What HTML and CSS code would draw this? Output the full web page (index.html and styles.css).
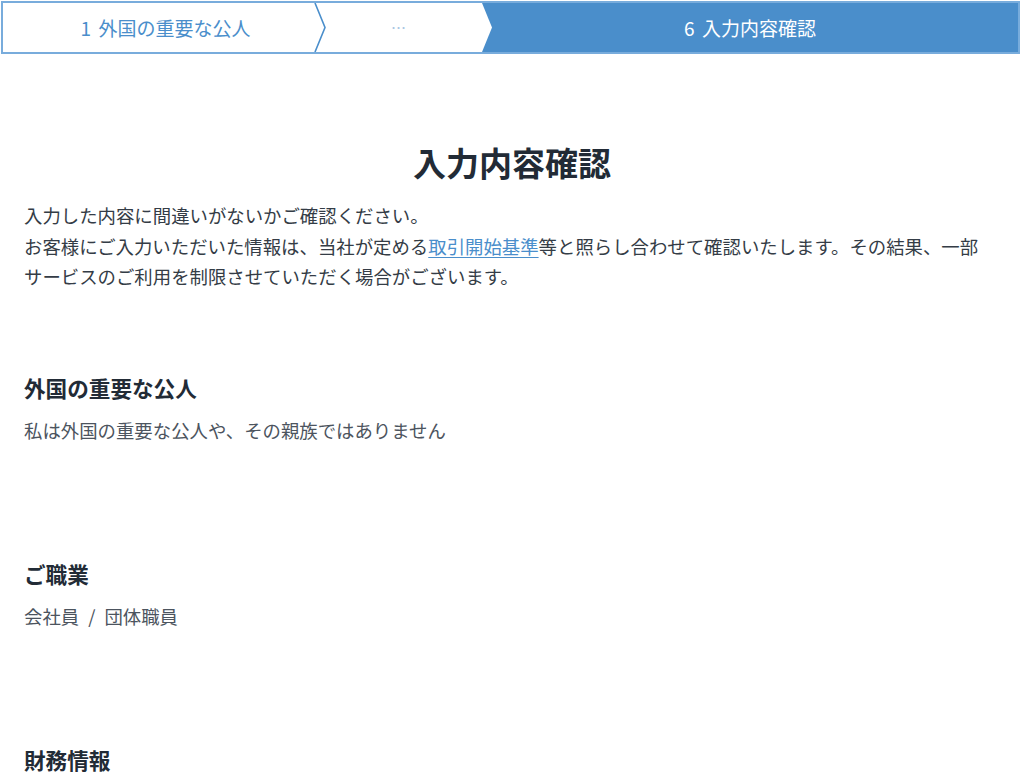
FILE: index.html
```html
<!DOCTYPE html>
<html lang="ja">
<head>
    <meta charset="UTF-8">
    <meta name="viewport" content="width=device-width, initial-scale=1.0">
    <title>入力内容確認</title>
    <link rel="stylesheet" href="styles.css">
</head>
<body>
    <nav class="stepper">
        <div class="step step-done">
            <span>1 外国の重要な公人</span>
            <svg class="step-arrow" width="14" height="49" viewBox="0 0 14 49">
                <polyline points="1,0 11,24.5 1,49" fill="none" stroke="#4a8ecb" stroke-width="1.6"/>
            </svg>
        </div>
        <div class="step step-skip">
            <span>…</span>
        </div>
        <div class="step step-current">
            <svg class="step-notch" width="11" height="49" viewBox="0 0 11 49">
                <polygon points="0,0 10,24.5 0,49" fill="#ffffff"/>
            </svg>
            <span>6 入力内容確認</span>
        </div>
    </nav>

    <main class="confirm">
        <h1 class="confirm-title">入力内容確認</h1>
        <p class="confirm-lead">
            入力した内容に間違いがないかご確認ください。<br>
            お客様にご入力いただいた情報は、当社が定める<a href="#" class="link">取引開始基準</a>等と照らし合わせて確認いたします。その結果、一部サービスのご利用を制限させていただく場合がございます。
        </p>

        <section class="item">
            <h2 class="item-label">外国の重要な公人</h2>
            <p class="item-value">私は外国の重要な公人や、その親族ではありません</p>
        </section>

        <section class="item">
            <h2 class="item-label">ご職業</h2>
            <p class="item-value">会社員<span class="slash">/</span>団体職員</p>
        </section>

        <section class="item">
            <h2 class="item-label">財務情報</h2>
        </section>
    </main>
</body>
</html>
```

FILE: styles.css
```css
:root {
    --blue: #4a8ecb;
    --blue-line: #78acdc;
    --blue-pale: #a9c6e3;
    --ink: #222b36;
    --text: #343c46;
    --muted: #4c545e;
}

* {
    margin: 0;
    padding: 0;
    box-sizing: border-box;
}

body {
    font-family: "Noto Sans CJK JP", "Noto Sans", sans-serif;
    color: var(--text);
    background: #ffffff;
}

/* progress bar */
.stepper {
    display: flex;
    height: 53px;
    margin: 1px 4px 0 1px;
    border: 2px solid var(--blue-line);
}

.step {
    position: relative;
    display: flex;
    align-items: center;
    justify-content: center;
    font-size: 19px;
    line-height: 1;
    word-spacing: 3px;
}

.step-done {
    flex: 0 0 313px;
    padding-left: 12px;
    color: var(--blue);
}

.step-skip {
    flex: 0 0 166px;
    color: var(--blue-pale);
    font-size: 15px;
    letter-spacing: 1px;
}

.step-current {
    flex: 1;
    color: #ffffff;
    background: var(--blue);
}

.step-arrow {
    position: absolute;
    top: 0;
    right: -12px;
    z-index: 1;
}

.step-notch {
    position: absolute;
    top: 0;
    left: 0;
}

/* confirmation body */
.confirm {
    padding: 84px 36px 40px 24px;
}

.confirm-title {
    font-size: 33px;
    line-height: 48px;
    font-weight: 700;
    color: var(--ink);
    text-align: center;
    margin-left: 12px;
    margin-bottom: 14px;
}

.confirm-lead {
    font-size: 18.4px;
    line-height: 30.5px;
    margin-bottom: 80px;
}

.link {
    color: var(--blue);
    text-decoration: underline;
    text-underline-offset: 3px;
}

.item + .item {
    margin-top: 112px;
}

.item-label {
    font-size: 21.6px;
    line-height: 31.5px;
    font-weight: 700;
    color: var(--ink);
    margin-bottom: 12px;
}

.item-value {
    font-size: 18.4px;
    line-height: 30.5px;
    color: var(--muted);
}

.slash {
    margin: 0 9px;
}
```
